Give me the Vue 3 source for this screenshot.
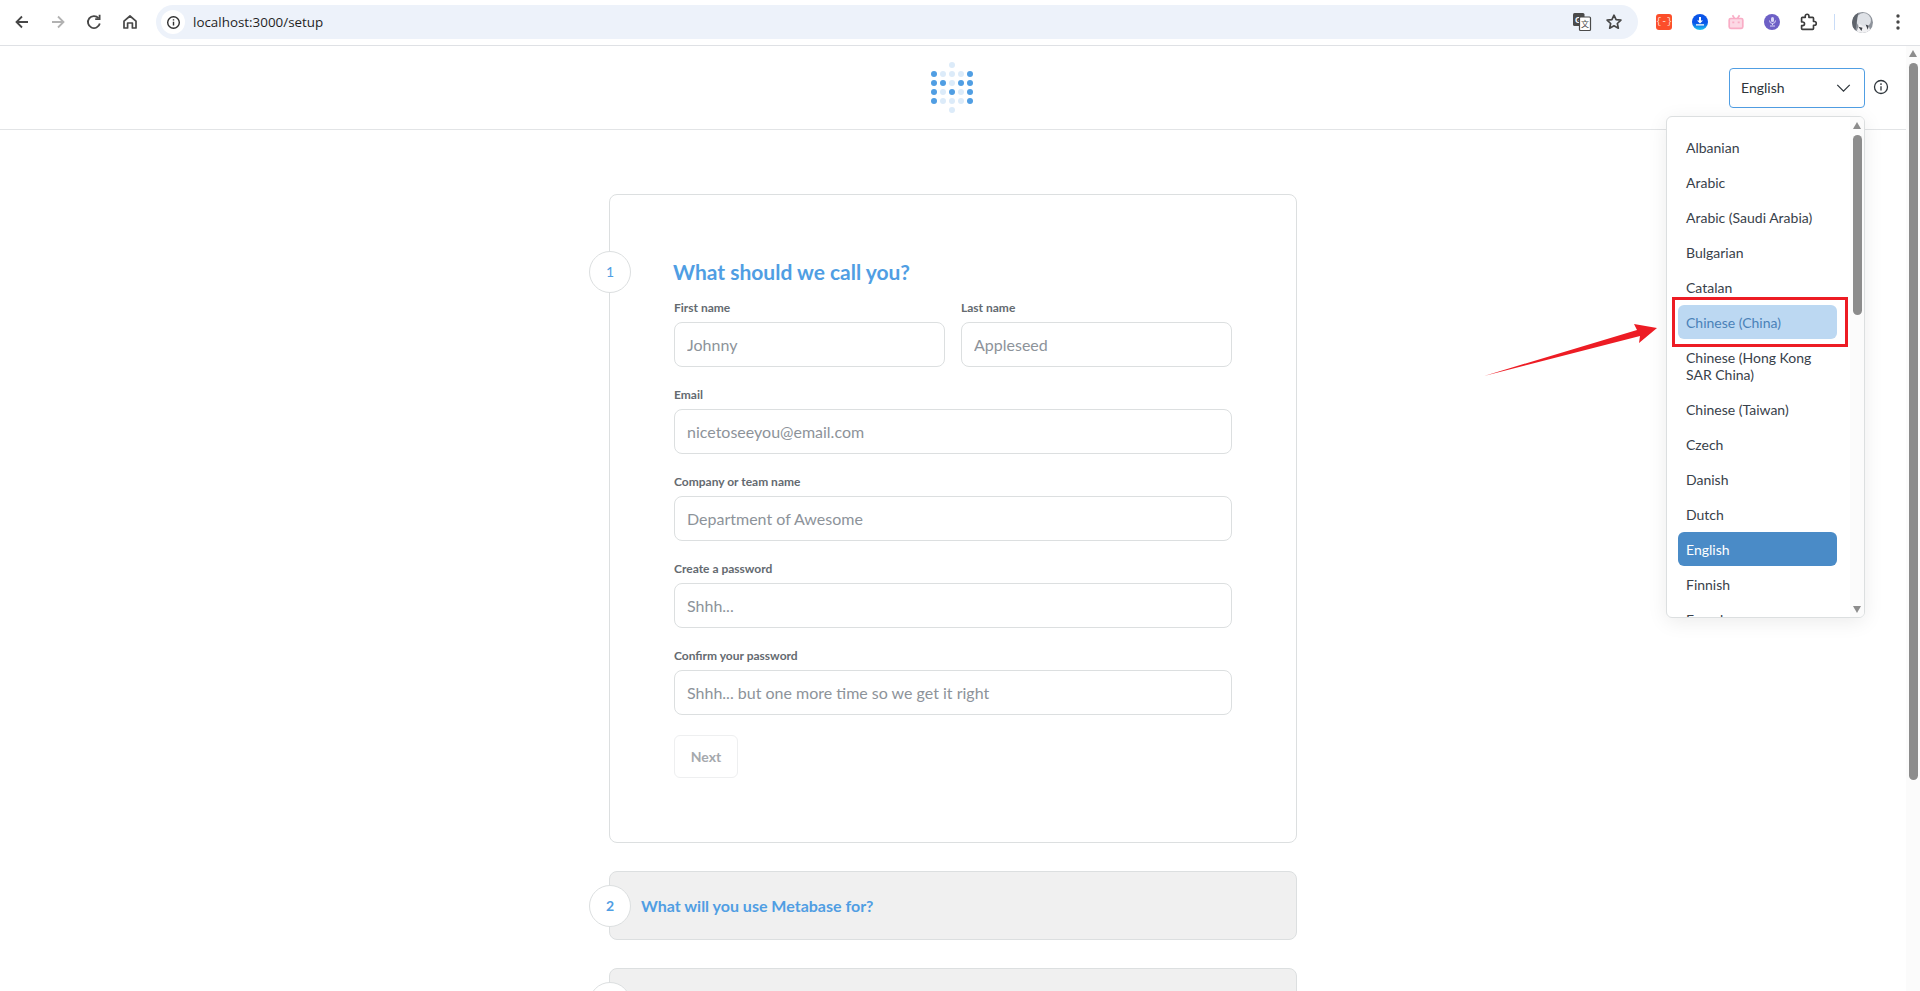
<script setup>
  const logoDots = [
    [18, 0, 0],
    [0, 9, 1], [9, 9, 0], [18, 9, 0], [27, 9, 0], [36, 9, 1],
    [0, 18, 1], [9, 18, 1], [18, 18, 0], [27, 18, 1], [36, 18, 1],
    [0, 27, 1], [9, 27, 0], [18, 27, 1], [27, 27, 0], [36, 27, 1],
    [0, 36, 1], [9, 36, 0], [18, 36, 0], [27, 36, 0], [36, 36, 1],
    [18, 45, 0],
  ]

  const formRows = [
    [
      { label: 'First name', hint: 'Johnny' },
      { label: 'Last name', hint: 'Appleseed' },
    ],
    [{ label: 'Email', hint: 'nicetoseeyou@email.com' }],
    [{ label: 'Company or team name', hint: 'Department of Awesome' }],
    [{ label: 'Create a password', hint: 'Shhh...' }],
    [{ label: 'Confirm your password', hint: 'Shhh... but one more time so we get it right' }],
  ]

  const languages = [
    'Albanian',
    'Arabic',
    'Arabic (Saudi Arabia)',
    'Bulgarian',
    'Catalan',
    'Chinese (China)',
    'Chinese (Hong Kong SAR China)',
    'Chinese (Taiwan)',
    'Czech',
    'Danish',
    'Dutch',
    'English',
    'Finnish',
    'French',
  ]
</script>

<template>
  <div class="page">
    <div class="chrome">
      <div class="nav-btn">
        <svg viewBox="0 0 24 24" width="24" height="24" fill="none" stroke="#474747" stroke-width="1.8"><path d="M18 12H6.5M12 6.5 6.5 12l5.5 5.5" /></svg>
      </div>
      <div class="nav-btn">
        <svg viewBox="0 0 24 24" width="24" height="24" fill="none" stroke="#b2b2b2" stroke-width="1.8"><path d="M6 12h11.5M12 6.5l5.5 5.5-5.5 5.5" /></svg>
      </div>
      <div class="nav-btn">
        <svg viewBox="0 0 24 24" width="24" height="24" fill="none" stroke="#474747" stroke-width="1.8"><path d="M17.8 13.5a6 6 0 1 1-1.3-5.4" /><path d="M17.6 4.8v4.4h-4.4" /></svg>
      </div>
      <div class="nav-btn">
        <svg viewBox="0 0 24 24" width="24" height="24" fill="none" stroke="#474747" stroke-width="1.7" stroke-linejoin="round"><path d="M6 11.2 12 6l6 5.2V18h-3.6v-5H9.6v5H6z" /></svg>
      </div>

      <div class="address">
        <div class="site-info">
          <svg viewBox="0 0 16 16" width="15" height="15" fill="none" stroke="#303030" stroke-width="1.5"><circle cx="8" cy="8" r="6.2" /><path d="M8 7.2v4M8 4.4v1.5" /></svg>
        </div>
        <span class="url">localhost:3000/setup</span>
        <div class="address-end">
          <svg class="translate" viewBox="0 0 20 20" width="20" height="20">
            <rect x="1" y="1" width="11.5" height="13" rx="1.5" fill="#4a4a4a" />
            <text x="3" y="11" font-size="9" font-weight="700" fill="#fff" font-family="Liberation Sans, sans-serif">G</text>
            <rect x="7.5" y="5" width="11" height="13.5" rx="1" fill="#fff" stroke="#4a4a4a" stroke-width="1.2" />
            <text x="9" y="15" font-size="8" fill="#4a4a4a" font-family="Noto Sans CJK SC, sans-serif">文</text>
          </svg>
          <svg viewBox="0 0 24 24" width="20" height="20" fill="none" stroke="#474747" stroke-width="2" stroke-linejoin="round"><path d="m12 3.8 2.5 5.3 5.8.7-4.3 4 1.2 5.7-5.2-2.9-5.2 2.9 1.2-5.7-4.3-4 5.8-.7z" /></svg>
        </div>
      </div>

      <div class="nav-btn ext-first">
        <div class="ext-red">{-}</div>
      </div>
      <div class="nav-btn">
        <svg viewBox="0 0 16 16" width="16" height="16">
          <defs>
            <linearGradient id="blueExt" x1="0" y1="0" x2="0" y2="1">
              <stop offset="0.55" stop-color="#0a55e8" />
              <stop offset="1" stop-color="#1cc6f0" />
            </linearGradient>
          </defs>
          <circle cx="8" cy="8" r="8" fill="url(#blueExt)" />
          <path d="M7 3h2v3.5h2L8 9.5 5 6.5h2zM4 10.3h8v1.2H4z" fill="#fff" />
        </svg>
      </div>
      <div class="nav-btn">
        <svg viewBox="0 0 16 16" width="16" height="16" fill="none" stroke="#f9adc6" stroke-width="1.7">
          <rect x="1.2" y="4.5" width="13.6" height="9.8" rx="1.5" fill="#fcd9e5" />
          <path d="m4.5 1.2 2 3.2M11.500 1.200l-2 3.200M4.300 8.300h2M9.700 8.300h2" />
        </svg>
      </div>
      <div class="nav-btn">
        <svg viewBox="0 0 16 16" width="16" height="16">
          <circle cx="8" cy="8" r="8" fill="#6d60c6" />
          <rect x="7" y="3" width="3" height="5" rx="1.5" fill="#d9d5f5" />
          <path d="M5.500 6.500a3 3 0 0 0 6 0M8.500 9.500V11M6 12h5" fill="none" stroke="#d9d5f5" stroke-width="1" />
        </svg>
      </div>
      <div class="nav-btn">
        <svg viewBox="0 0 24 24" width="22" height="22" fill="none" stroke="#3c3c3c" stroke-width="1.8" stroke-linejoin="round"><path d="M9 5.500a2 2 0 0 1 4 0V7h4a1 1 0 0 1 1 1v3.500h1a2 2 0 0 1 0 4h-1V19a1 1 0 0 1-1 1H6a1 1 0 0 1-1-1v-3h1.200a2 2 0 0 0 0-4H5V8a1 1 0 0 1 1-1h3z" /></svg>
      </div>
      <div class="divider"></div>
      <div class="nav-btn">
        <svg viewBox="0 0 20 20" width="21" height="21">
          <defs>
            <clipPath id="avatarClip"><circle cx="10" cy="10" r="10" /></clipPath>
          </defs>
          <g clip-path="url(#avatarClip)">
            <rect width="20" height="20" fill="#8e939b" />
            <ellipse cx="11" cy="8" rx="7" ry="7" fill="#dfe2e7" />
            <path d="M4 20 7 11l4 3 5-1 2 7z" fill="#f1f1f3" />
            <path d="M0 0h6L3 20H0z" fill="#5f646c" />
            <path d="M6 14l4 1-1 3zM13 12l3 1-1 4z" fill="#3f434a" />
          </g>
        </svg>
      </div>
      <div class="nav-btn">
        <svg viewBox="0 0 24 24" width="24" height="24" fill="#474747"><circle cx="12" cy="6" r="1.7" /><circle cx="12" cy="12" r="1.7" /><circle cx="12" cy="18" r="1.7" /></svg>
      </div>
    </div>

    <div class="viewport">
      <div class="main">
        <header class="head">
          <div></div>
          <svg class="logo" viewBox="-3 -3 42 51" width="42" height="51">
            <circle
              v-for="(dot, i) in logoDots"
              :key="i"
              :cx="dot[0]"
              :cy="dot[1]"
              r="3"
              :fill="dot[2] ? '#509ee3' : '#dcebf9'"
            />
          </svg>
          <div class="head-right">
            <div class="lang-select">
              <span>English</span>
              <svg viewBox="0 0 16 9" width="15" height="8" fill="none" stroke="#2e353b" stroke-width="1.4"><path d="m1 1 7 7 7-7" /></svg>
            </div>
            <svg class="help" viewBox="0 0 16 16" width="16" height="16" fill="none" stroke="#2e353b" stroke-width="1.3"><circle cx="8" cy="8" r="6.5" /><path d="M8 7.2v4.2M8 4.300v1.600" /></svg>
          </div>
        </header>

        <div class="steps">
          <section class="card">
            <div class="badge">1</div>
            <h2 class="title">What should we call you?</h2>
            <div class="fields">
              <div v-for="(row, r) in formRows" :key="r" class="field-row">
                <label v-for="field in row" :key="field.label" class="field">
                  <span class="label">{{ field.label }}</span>
                  <input class="input" :placeholder="field.hint" />
                </label>
              </div>
            </div>
            <button class="next">Next</button>
          </section>

          <section class="card-closed">
            <div class="badge badge-strong">2</div>
            <span class="closed-title">What will you use Metabase for?</span>
          </section>

          <section class="card-closed">
            <div class="badge badge-strong"></div>
          </section>
        </div>
      </div>

      <div class="page-scroll">
        <div class="arrow-up"></div>
        <div class="page-thumb"></div>
      </div>
    </div>

    <div class="dropdown">
      <ul class="lang-list">
        <li
          v-for="lang in languages"
          :key="lang"
          class="lang-item"
          :class="{ hovered: lang === 'Chinese (China)', active: lang === 'English' }"
        >
          {{ lang }}
        </li>
      </ul>
      <div class="list-scroll">
        <div class="arrow-up small"></div>
        <div class="list-thumb"></div>
        <div class="arrow-down"></div>
      </div>
    </div>

    <!-- red marks drawn over the screenshot -->
    <div class="mark"></div>
    <svg class="pointer" viewBox="0 0 180 60" width="180" height="60">
      <path d="M0 60 153 14 150 8 173 12 155 27 156 20z" fill="#ed1c24" />
    </svg>
  </div>
</template>

<style>
  html,
  body {
    margin: 0;
    overflow: hidden;
    background: #fff;
  }
</style>

<style scoped>
  .page {
    position: relative;
    display: flex;
    flex-direction: column;
    height: 991px;
    overflow: hidden;
    font-family: Lato, "Open Sans", sans-serif;
    color: #2e353b;
    background: #fff;
  }

  /* 浏览器工具栏 */
  .chrome {
    display: flex;
    align-items: center;
    flex: none;
    box-sizing: border-box;
    height: 46px;
    padding: 0 4px 1px;
    border-bottom: 1px solid #dfe1e5;
    background: #fff;
  }

  .nav-btn {
    display: flex;
    align-items: center;
    justify-content: center;
    flex: none;
    width: 36px;
    height: 36px;
  }

  .address {
    display: flex;
    align-items: center;
    flex: 1;
    height: 34px;
    margin-left: 8px;
    padding: 0 14px 0 5px;
    border-radius: 17px;
    background: #edf2fa;
  }

  .site-info {
    display: flex;
    align-items: center;
    justify-content: center;
    width: 24px;
    height: 24px;
    border-radius: 50%;
    background: #fff;
  }

  .url {
    margin-left: 8px;
    font-family: "Open Sans", sans-serif;
    font-size: 13.4px;
    color: #1f1f1f;
  }

  .address-end {
    display: flex;
    align-items: center;
    gap: 12px;
    margin-left: auto;
  }

  .ext-first {
    margin-left: 8px;
  }

  .ext-red {
    width: 16px;
    height: 16px;
    border-radius: 3px;
    background: #fc4e2a;
    color: #fde0d8;
    font-family: "Liberation Mono", monospace;
    font-size: 9px;
    line-height: 16px;
    text-align: center;
  }

  .divider {
    flex: none;
    width: 1px;
    height: 16px;
    margin: 0 9px 0 8px;
    background: #c9dcf7;
  }

  .viewport {
    display: flex;
    flex: 1;
    min-height: 0;
  }

  .main {
    flex: 1;
    min-width: 0;
    overflow: hidden;
  }

  /* 顶部logo和语言选择 */
  .head {
    display: grid;
    grid-template-columns: 1fr auto 1fr;
    align-items: center;
    box-sizing: border-box;
    height: 84px;
    border-bottom: 1px solid #e2e4e6;
  }

  .logo {
    margin-left: -2px;
  }

  .head-right {
    display: flex;
    align-items: center;
    justify-content: flex-end;
    gap: 8px;
    padding-right: 17px;
  }

  .lang-select {
    display: flex;
    align-items: center;
    justify-content: space-between;
    box-sizing: border-box;
    width: 136px;
    height: 40px;
    padding: 0 13px 0 11px;
    border: 1px solid #509ee3;
    border-radius: 4px;
    font-size: 14px;
  }

  .help {
    margin-bottom: 2px;
  }

  .steps {
    display: flex;
    flex-direction: column;
    gap: 28px;
    width: 688px;
    margin: 64px auto 0;
  }

  .card {
    position: relative;
    box-sizing: border-box;
    height: 649px;
    padding: 64px 64px 0;
    border: 1px solid #dcdfe0;
    border-radius: 8px;
  }

  .badge {
    position: absolute;
    left: -21px;
    top: 56px;
    box-sizing: border-box;
    width: 42px;
    height: 42px;
    border: 1px solid #dcdfe0;
    border-radius: 50%;
    background: #fff;
    color: #509ee3;
    font-size: 14px;
    line-height: 40px;
    text-align: center;
  }

  .badge-strong {
    top: 13px;
    font-weight: 700;
  }

  .title {
    margin: 0 0 15px -1px;
    font-size: 21px;
    font-weight: 700;
    line-height: 26px;
    color: #509ee3;
  }

  .fields {
    display: flex;
    flex-direction: column;
    gap: 20px;
  }

  .field-row {
    display: flex;
    gap: 16px;
  }

  .field {
    display: flex;
    flex: 1;
    flex-direction: column;
    gap: 7px;
    min-width: 0;
  }

  .label {
    font-size: 12px;
    font-weight: 700;
    line-height: 15px;
    color: #646a70;
  }

  .input {
    box-sizing: border-box;
    width: 100%;
    height: 45px;
    padding: 0 12px;
    border: 1px solid #dcdfe0;
    border-radius: 8px;
    outline: none;
    font-family: Lato, sans-serif;
    font-size: 16px;
  }

  .input::placeholder {
    color: #8d939a;
    opacity: 1;
  }

  .next {
    display: block;
    width: 64px;
    height: 43px;
    margin-top: 20px;
    border: 1px solid #eeeff0;
    border-radius: 6px;
    background: #fff;
    color: #a5a9ad;
    font-family: Lato, sans-serif;
    font-size: 14px;
    font-weight: 700;
  }

  .card-closed {
    position: relative;
    display: flex;
    align-items: center;
    flex: none;
    box-sizing: border-box;
    height: 69px;
    padding-left: 31px;
    border: 1px solid #dcdfe0;
    border-radius: 8px;
    background: #f0f0f0;
  }

  .closed-title {
    font-size: 16px;
    font-weight: 700;
    color: #509ee3;
  }

  /* 页面滚动条 */
  .page-scroll {
    display: flex;
    flex: none;
    flex-direction: column;
    align-items: center;
    width: 14px;
    background: #fbfbfb;
  }

  .arrow-up {
    width: 0;
    height: 0;
    margin-top: 4px;
    border-right: 4.5px solid transparent;
    border-left: 4.5px solid transparent;
    border-bottom: 7px solid #8c8c8c;
  }

  .page-thumb {
    width: 9px;
    height: 717px;
    margin-top: 6px;
    border-radius: 5px;
    background: #8c8c8c;
  }

  /* 语言下拉框 */
  .dropdown {
    position: absolute;
    top: 116px;
    left: 1666px;
    box-sizing: border-box;
    width: 199px;
    height: 502px;
    overflow: hidden;
    border: 1px solid #dcdfe0;
    border-radius: 6px;
    background: #fff;
    box-shadow: 0 4px 20px rgba(0, 0, 0, 0.08);
  }

  .lang-list {
    width: 159px;
    margin: 0;
    padding: 13px 0 0 11px;
    list-style: none;
  }

  .lang-item {
    margin-bottom: 1px;
    padding: 8.5px 8px;
    border-radius: 6px;
    font-size: 14px;
    line-height: 17px;
    color: #38414a;
  }

  .lang-item.hovered {
    background: #bcd8f2;
    color: #4a82b8;
  }

  .lang-item.active {
    background: #4a8bc7;
    color: #fff;
  }

  .list-scroll {
    position: absolute;
    top: 0;
    right: 0;
    bottom: 0;
    display: flex;
    flex-direction: column;
    align-items: center;
    width: 14px;
    background: #fbfbfb;
  }

  .small {
    margin-top: 5px;
  }

  .list-thumb {
    width: 9px;
    height: 180px;
    margin-top: 6px;
    border-radius: 5px;
    background: #8c8c8c;
  }

  .arrow-down {
    width: 0;
    height: 0;
    margin-top: auto;
    margin-bottom: 4px;
    border-right: 4.5px solid transparent;
    border-left: 4.5px solid transparent;
    border-top: 7px solid #8c8c8c;
  }

  .mark {
    position: absolute;
    top: 297px;
    left: 1672px;
    box-sizing: border-box;
    width: 176px;
    height: 50px;
    border: 3px solid #ed1c24;
  }

  .pointer {
    position: absolute;
    top: 316px;
    left: 1484px;
  }
</style>
